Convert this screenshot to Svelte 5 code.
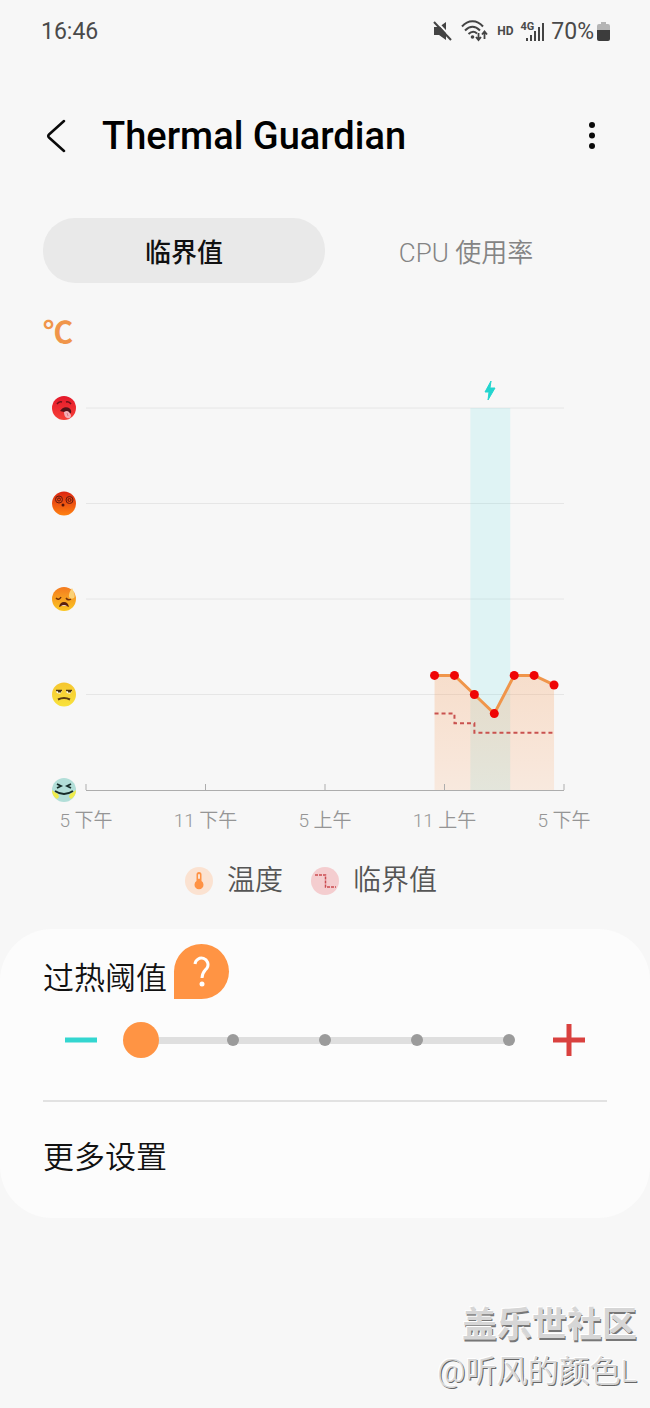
<script>
	const GRID_LEFT = 43;
	const GRID_RIGHT = 521;
	const GRID_BOTTOM = 418;
	const LEVEL_HEIGHT = 95.5;
	const HOURS = 24;

	const tabs = ['临界值', 'CPU 使用率'];
	const levels = [4, 3, 2, 1];
	const ticks = [
		{ hour: 0, label: '5 下午' },
		{ hour: 6, label: '11 下午' },
		{ hour: 12, label: '5 上午' },
		{ hour: 18, label: '11 上午' },
		{ hour: 24, label: '5 下午' }
	];
	const temperature = [
		{ hour: 17.5, value: 1.2 },
		{ hour: 18.5, value: 1.2 },
		{ hour: 19.5, value: 1 },
		{ hour: 20.5, value: 0.8 },
		{ hour: 21.5, value: 1.2 },
		{ hour: 22.5, value: 1.2 },
		{ hour: 23.5, value: 1.1 }
	];
	const threshold = [
		{ hour: 17.5, value: 0.8 },
		{ hour: 18.5, value: 0.8 },
		{ hour: 18.5, value: 0.7 },
		{ hour: 19.5, value: 0.7 },
		{ hour: 19.5, value: 0.6 },
		{ hour: 23.5, value: 0.6 }
	];
	const charging = { from: 19.3, to: 21.3 };

	let activeTab = $state(0);
	let limit = $state(0);

	function x(hour) {
		return GRID_LEFT + (hour / HOURS) * (GRID_RIGHT - GRID_LEFT);
	}

	function y(value) {
		return GRID_BOTTOM - value * LEVEL_HEIGHT;
	}

	function toPoints(series) {
		return series.map((p) => `${x(p.hour)},${y(p.value)}`).join(' ');
	}

	const line = toPoints(temperature);
	const area = `${x(17.5)},${GRID_BOTTOM} ${line} ${x(23.5)},${GRID_BOTTOM}`;
</script>

<div class="screen">
	<div class="status-bar">
		<span class="clock">16:46</span>
		<div class="status-icons">
			<svg class="mute" width="20" height="20" viewBox="0 0 20 20">
				<path d="M1 6h5l7-5v18l-7-5H1z" fill="#444" />
				<path d="M3 0l17 18" stroke="#f7f7f7" stroke-width="2" />
				<path d="M1 1l17 18" stroke="#444" stroke-width="2" />
			</svg>
			<svg class="wifi" width="28" height="22" viewBox="0 0 28 22" fill="none" stroke="#444" stroke-width="2">
				<path d="M1 6.500C7-.5 16-.5 22 6.500" />
				<path d="M4 10.500c5-5 10-5 15 0" />
				<path d="M7.500 14c3-2.800 6-2.800 8.500-.5" />
				<circle cx="11.500" cy="17" r="1.800" fill="#444" stroke="none" />
				<path d="M17.500 13v7M15 17l2.500 3 2.500-3M23.500 19v-7M21 14.500l2.500-3 2.500 3" stroke-width="1.800" />
			</svg>
			<span class="hd">HD</span>
			<div class="signal">
				<span>4G</span>
				<svg width="18" height="19" viewBox="0 0 18 19" fill="#444">
					<path d="M0 16h2v3H0zM4 13h2v6H4zM8 9h2v10H8zM12 5h2v14h-2zM16 1h2v18h-2z" />
				</svg>
			</div>
			<span class="percent">70%</span>
			<svg class="battery" width="13" height="19" viewBox="0 0 13 19">
				<path d="M4 0h5v2h2a2 2 0 0 1 2 2v5H0V4a2 2 0 0 1 2-2h2z" fill="#b5b5b5" />
				<path d="M0 8h13v9a2 2 0 0 1-2 2H2a2 2 0 0 1-2-2z" fill="#3c3c3c" />
			</svg>
		</div>
	</div>

	<header>
		<button class="icon-btn back" aria-label="返回">
			<svg width="20" height="36" viewBox="0 0 20 36">
				<path d="M18 3L3 16.500q-1.500 1.500 0 3L18 33" fill="none" stroke="#0a0a0a" stroke-width="2.500" stroke-linecap="round" />
			</svg>
		</button>
		<h1>Thermal Guardian</h1>
		<button class="icon-btn" aria-label="更多选项">
			<svg width="8" height="30" viewBox="0 0 8 30" fill="#0a0a0a">
				<circle cx="4" cy="4" r="3" />
				<circle cx="4" cy="14.500" r="3" />
				<circle cx="4" cy="25" r="3" />
			</svg>
		</button>
	</header>

	<main>
		<div class="tabs" role="tablist">
			{#each tabs as tab, i}
				<button class="tab" class:active={activeTab === i} role="tab" aria-selected={activeTab === i} onclick={() => (activeTab = i)}>
					{tab}
				</button>
			{/each}
		</div>

		<div class="unit">℃</div>

		<svg class="chart" viewBox="0 0 564 470">
			<defs>
				<linearGradient id="area" x1="0" y1="0" x2="0" y2="1">
					<stop offset="0" stop-color="#f59650" stop-opacity="0.26" />
					<stop offset="1" stop-color="#ff9244" stop-opacity="0.14" />
				</linearGradient>
				<linearGradient id="red" x1="0" y1="0" x2="0" y2="1">
					<stop offset="0" stop-color="#e4182a" />
					<stop offset="1" stop-color="#f64038" />
				</linearGradient>
				<linearGradient id="hot" x1="0" y1="0" x2="0" y2="1">
					<stop offset="0" stop-color="#dc2512" />
					<stop offset="1" stop-color="#ff8212" />
				</linearGradient>
				<linearGradient id="warm" x1="0" y1="0" x2="0" y2="1">
					<stop offset="0" stop-color="#f47a20" />
					<stop offset="1" stop-color="#fbc723" />
				</linearGradient>
				<linearGradient id="mild" x1="0" y1="0" x2="0" y2="1">
					<stop offset="0" stop-color="#f6c630" />
					<stop offset="1" stop-color="#f8e23c" />
				</linearGradient>
			</defs>

			{#each levels as level}
				<line class="grid-line" x1={GRID_LEFT} x2={GRID_RIGHT} y1={y(level)} y2={y(level)} />
			{/each}

			<rect x={x(charging.from)} y={y(4)} width={x(charging.to) - x(charging.from)} height={GRID_BOTTOM - y(4)} fill="#28dce0" fill-opacity="0.11" />
			<path d="M448 9l-6 11h4l-1 8 7-12h-5z" fill="#22d5cf" stroke="#22d5cf" />

			<polygon points={area} fill="url(#area)" />
			<polyline points={toPoints(threshold)} fill="none" stroke="#c9524f" stroke-width="2" stroke-dasharray="4 3" />
			<polyline points={line} fill="none" stroke="#f0954a" stroke-width="3" />
			{#each temperature as point}
				<circle cx={x(point.hour)} cy={y(point.value)} r="4.5" fill="#ef0505" />
			{/each}

			<line class="axis" x1={GRID_LEFT} x2={GRID_RIGHT} y1={GRID_BOTTOM + 0.5} y2={GRID_BOTTOM + 0.5} />
			{#each ticks as tick}
				<line class="axis" x1={x(tick.hour)} x2={x(tick.hour)} y1={GRID_BOTTOM - 6} y2={GRID_BOTTOM} />
				<text class="tick-label" x={x(tick.hour)} y="455" text-anchor="middle">{tick.label}</text>
			{/each}

			<!-- tongue out -->
			<g transform="translate(21 {y(4)})">
				<circle r="12" fill="url(#red)" />
				<path d="M-7-4q2-3 5-2M2-6q3-1 5 2" fill="none" stroke="#6f1119" stroke-width="1.500" />
				<path d="M-4 3Q-1-2 4-.5 8 1 7 5l-4 1-3-2z" fill="#521218" />
				<path d="M0 4q3-2 5 0l2 3q0 4-4 3Q0 9 0 4z" fill="#f3b0b8" />
				<path d="M3 5l1 3" stroke="#d77886" />
			</g>

			<!-- spiral eyes -->
			<g transform="translate(21 {y(3)})">
				<circle r="12" fill="url(#hot)" />
				<g fill="none" stroke="#641b10">
					<circle cx="-5" cy="-4" r="3.500" />
					<circle cx="-5" cy="-4" r="1.500" />
					<circle cx="5.500" cy="-3.500" r="3.500" />
					<circle cx="5.500" cy="-3.500" r="1.500" />
				</g>
				<circle cx="-1" cy="1.500" r="1.500" fill="#551409" />
			</g>

			<!-- cold sweat -->
			<g transform="translate(21 {y(2)})">
				<circle r="12" fill="url(#warm)" />
				<path d="M-8-1q3 3 5-1M2-1q2 3 5 1" fill="none" stroke="#70300c" stroke-width="1.500" />
				<path d="M-5 8Q-4 3 0 3q4 0 5 5-5-3-10 0z" fill="#59200e" />
				<path d="M-3 7q3-2 6 0z" fill="#f1dcd0" />
				<path d="M8-11q-4 6-3 9 2 3 5 1 2-2-2-10z" fill="#fbd176" />
			</g>

			<!-- unamused -->
			<g transform="translate(21 {y(1)})">
				<circle r="12" fill="url(#mild)" />
				<path d="M-8-4h6q-1 4-3 3-3 0-3-3zM2-4h6q-1 4-3 3-3 0-3-3z" fill="#fffbe4" />
				<path d="M-8-4h6M2-4h6" stroke="#4a3510" stroke-width="1.500" />
				<path d="M-6-4h3v2h-3zM4-4h3v2H4z" fill="#4a3510" />
				<path d="M-6 5q6-3 12 0" fill="none" stroke="#5a3c12" stroke-width="2" />
			</g>

			<!-- laughing -->
			<g transform="translate(21 {y(0)})">
				<circle r="12" fill="#b2ded8" />
				<path d="M-12 0Q-10 2-6 4l1 3-2 2q-5-3-5-9zM12 0Q10 2 6 4L5 7l2 2q5-3 5-9z" fill="#f0ec4c" />
				<path d="M-7-6l4 2-4 2M7-6L3-4l4 2M-9 1q9 6 18 0" fill="none" stroke="#152b28" stroke-width="1.800" />
			</g>
		</svg>

		<div class="legend">
			<div class="legend-item">
				<svg width="28" height="28" viewBox="0 0 28 28">
					<circle cx="14" cy="14" r="14" fill="#fbe2d1" />
					<path d="M11.500 7.500a2.500 2.500 0 0 1 5 0V14a4.500 4.500 0 1 1-5 0z" fill="#ff9244" />
					<path d="M14 8v3" stroke="#fbe2d1" stroke-width="2" stroke-linecap="round" />
				</svg>
				<span>温度</span>
			</div>
			<div class="legend-item">
				<svg width="28" height="28" viewBox="0 0 28 28">
					<circle cx="14" cy="14" r="14" fill="#f4cdcf" />
					<path d="M4 8h10.500v12H25" fill="none" stroke="#ca4b50" stroke-width="1.500" stroke-dasharray="3 1" />
				</svg>
				<span>临界值</span>
			</div>
		</div>
	</main>

	<section class="card">
		<div class="card-title">
			<label for="limit">过热阈值</label>
			<button class="help" aria-label="帮助">
				<svg width="20" height="32" viewBox="0 0 20 32">
					<path d="M3 8a6.500 6.500 0 1 1 12 4c-2.500 3-5 4.500-5 10" fill="none" stroke="#fff" stroke-width="3" />
					<circle cx="10" cy="28" r="2.500" fill="#fff" />
				</svg>
			</button>
		</div>

		<div class="limit-row">
			<button class="step" aria-label="降低" onclick={() => (limit = Math.max(0, limit - 1))}>
				<svg width="32" height="32" viewBox="0 0 32 32"><path d="M0 16h32" stroke="#33d6d0" stroke-width="5" /></svg>
			</button>
			<div class="slider">
				<div class="track"></div>
				<div class="stops">
					{#each { length: 5 } as _}
						<span class="stop"></span>
					{/each}
				</div>
				<input id="limit" type="range" min="0" max="4" step="1" bind:value={limit} />
			</div>
			<button class="step" aria-label="提高" onclick={() => (limit = Math.min(4, limit + 1))}>
				<svg width="32" height="32" viewBox="0 0 32 32"><path d="M0 16h32M16 0v32" stroke="#d9413f" stroke-width="5" /></svg>
			</button>
		</div>

		<a class="more" href="#more">更多设置</a>
	</section>

	<footer>
		<div class="community">盖乐世社区</div>
		<div class="author">@听风的颜色L</div>
	</footer>
</div>

<style>
	:global(body) {
		background: #f7f7f7;
	}

	.screen {
		font-family: Roboto, 'Noto Sans CJK SC', sans-serif;
		color: #1c1c1c;
	}

	svg {
		display: block;
	}

	button {
		padding: 0;
		border: none;
		background: transparent;
		font: inherit;
		color: inherit;
		cursor: pointer;
	}

	.status-bar {
		display: flex;
		justify-content: space-between;
		align-items: center;
		height: 62px;
		padding: 0 40px 0 41px;
		font-size: 23px;
		color: #4a4a4a;
	}

	.status-icons {
		display: flex;
		align-items: center;
	}

	.wifi {
		margin-left: 8px;
	}

	.hd {
		margin-left: 8px;
		font-size: 12px;
		font-weight: 700;
	}

	.signal {
		display: flex;
		align-items: flex-end;
		margin: 0 7px;
	}

	.signal span {
		align-self: flex-start;
		margin-right: -8px;
		font-size: 11px;
		font-weight: 700;
		line-height: 10px;
	}

	.percent {
		margin-right: 3px;
	}

	header {
		display: flex;
		align-items: center;
		height: 148px;
		padding: 0 54px 0 46px;
	}

	.back {
		margin-right: 36px;
	}

	h1 {
		flex: 1;
		margin: 0;
		font-size: 38px;
		font-weight: 500;
		line-height: 48px;
		color: #000;
	}

	main {
		padding: 8px 43px 28px;
	}

	.tabs {
		display: flex;
	}

	.tab {
		flex: 1;
		height: 65px;
		border-radius: 32px;
		font-size: 26px;
		font-weight: 350;
		color: #848484;
	}

	.tab.active {
		background: #e9e9e9;
		font-weight: 500;
		color: #111;
	}

	.unit {
		margin-top: 33px;
		font-size: 30px;
		font-weight: 700;
		line-height: 34px;
		color: #f0954a;
	}

	.chart {
		width: 100%;
		margin-top: 22px;
	}

	.grid-line {
		stroke: #e6e6e6;
	}

	.axis {
		stroke: #adadad;
	}

	.tick-label {
		font-size: 19px;
		font-weight: 350;
		fill: #959595;
	}

	.legend {
		display: flex;
		justify-content: center;
		margin-top: 19px;
		font-size: 28px;
		font-weight: 350;
		line-height: 40px;
		color: #555;
	}

	.legend-item {
		display: flex;
		align-items: center;
		gap: 14px;
		margin-right: 28px;
	}

	.card {
		padding: 15px 43px 40px;
		border-radius: 52px;
		background: #fcfcfc;
		font-size: 31px;
		font-weight: 350;
		line-height: 40px;
		color: #111;
	}

	.card-title {
		display: flex;
		align-items: flex-end;
		gap: 7px;
	}

	.help {
		display: flex;
		align-items: center;
		justify-content: center;
		width: 55px;
		height: 55px;
		border-radius: 50% 50% 50% 0;
		background: #ff9444;
	}

	.limit-row {
		display: flex;
		align-items: center;
		gap: 26px;
		padding: 23px 22px 42px;
		border-bottom: 2px solid #e2e2e2;
	}

	.slider {
		flex: 1;
		display: grid;
		align-items: center;
	}

	.slider > * {
		grid-area: 1 / 1;
	}

	.track {
		height: 7px;
		margin: 0 18px;
		background: #dfdfdf;
	}

	.stops {
		display: flex;
		justify-content: space-between;
		padding: 0 12px;
	}

	.stop {
		width: 12px;
		height: 12px;
		border-radius: 50%;
		background: #9b9b9b;
	}

	input[type='range'] {
		appearance: none;
		width: 100%;
		height: 36px;
		margin: 0;
		background: transparent;
	}

	input[type='range']::-webkit-slider-thumb {
		appearance: none;
		width: 36px;
		height: 36px;
		border-radius: 50%;
		background: #ff9444;
	}

	.more {
		display: block;
		margin-top: 36px;
		color: inherit;
		text-decoration: none;
	}

	footer {
		margin-top: 85px;
		padding-right: 13px;
		text-align: right;
		line-height: 46px;
		color: #d6d6d6;
	}

	.community {
		font-size: 35px;
		font-weight: 700;
		text-shadow: -1px -1px 0 #fff, 1px 2px 0 #777;
	}

	.author {
		font-size: 31px;
		font-weight: 350;
		text-shadow: -1px -1px 0 #fff, 1px 1px 0 #666;
	}
</style>
